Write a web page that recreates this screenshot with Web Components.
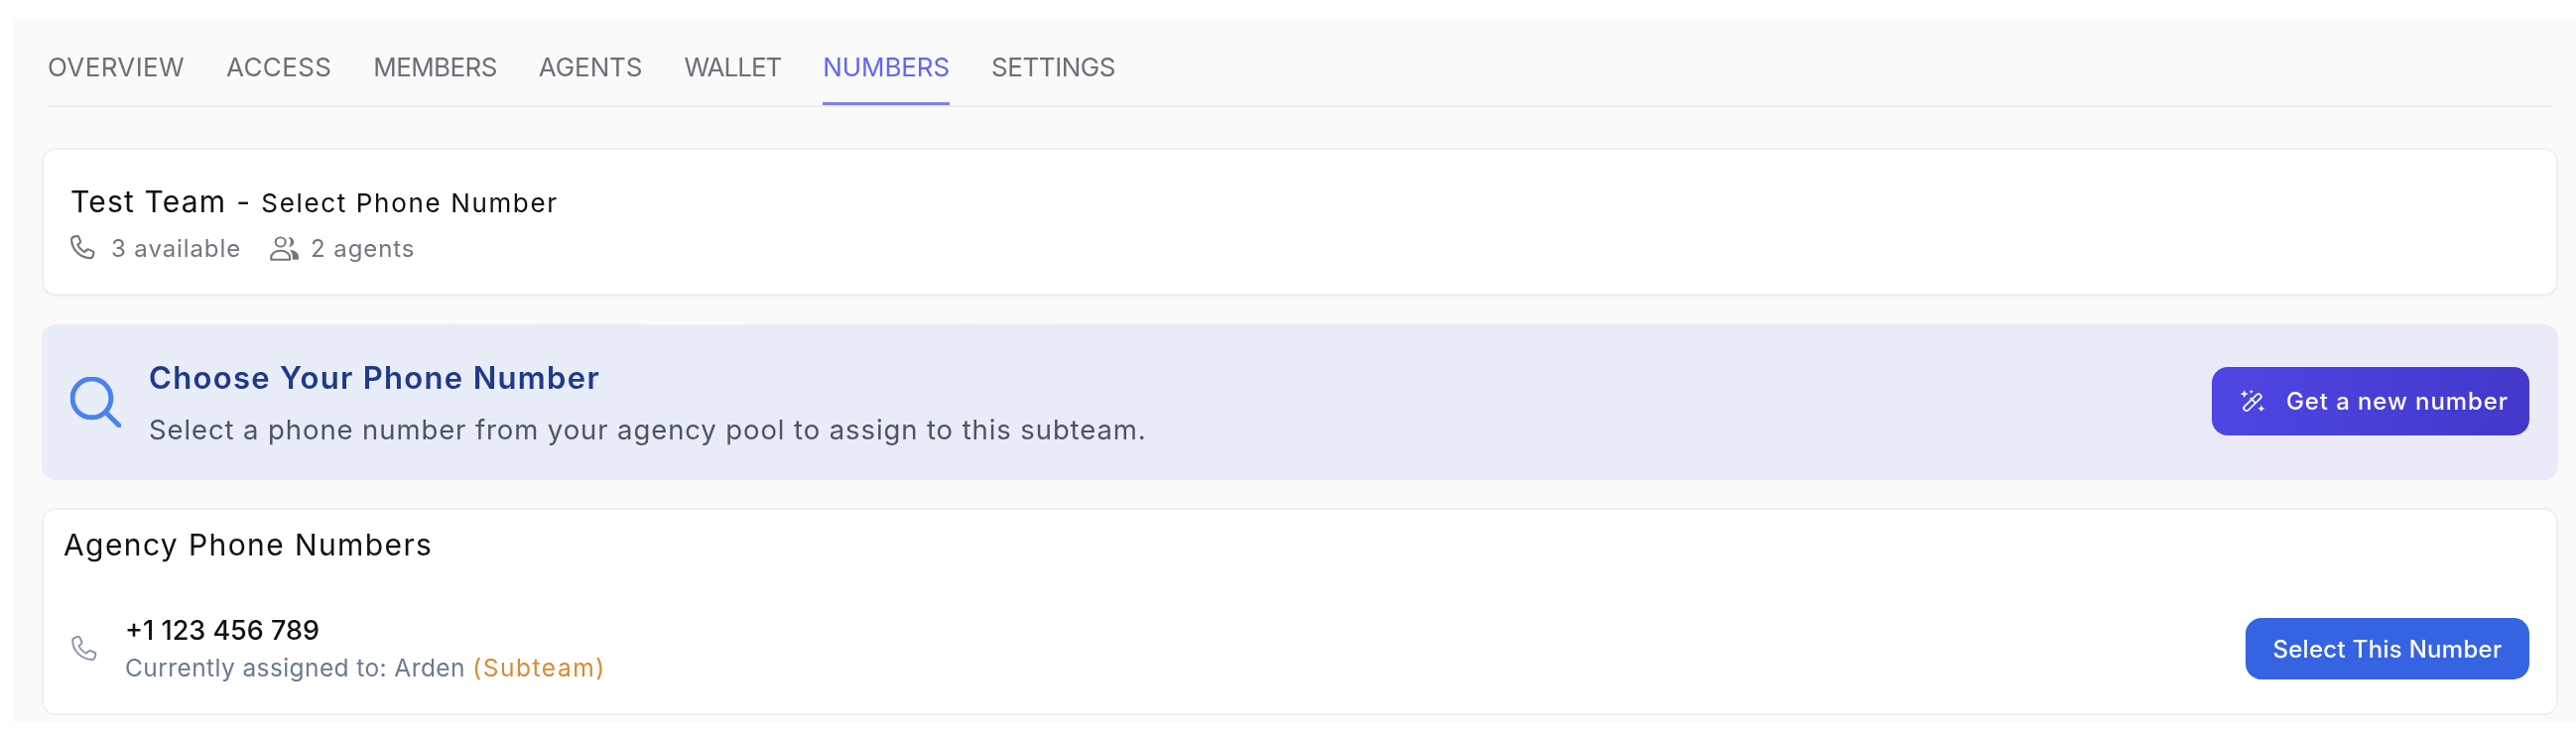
<!DOCTYPE html>
<html>
<head>
<meta charset="utf-8">
<style>
    html, body { margin: 0; background: #fff; }
    body { font-family: Inter, "Open Sans", sans-serif; }
</style>
</head>
<body>
<team-page>
    <tab-bar active="NUMBERS"></tab-bar>
    <team-header name="Test Team" sub="Select Phone Number" available="3 available" agents="2 agents"></team-header>
    <choose-banner>
        <span slot="title">Choose Your Phone Number</span>
        <span slot="text">Select a phone number from your agency pool to assign to this subteam.</span>
        <action-button slot="action" variant="indigo" icon="wand">Get a new number</action-button>
    </choose-banner>
    <numbers-card heading="Agency Phone Numbers">
        <number-row number="+1 123 456 789" owner="Arden" kind="(Subteam)">
            <action-button variant="blue">Select This Number</action-button>
        </number-row>
    </numbers-card>
</team-page>

<script>
const ICONS = {
    phone: {
        box: '2.6 1.6 19.8 20.8',
        body: `<path d="M5.6 2.9 7.3 2.4c.8-.2 1.6.2 1.9.9l1.2 2.8c.3.7.1 1.4-.4 1.9L8.400 9.500c.9 2.200 2.900 4.200 5.600 5.700l1.500-1.500c.5-.5 1.300-.7 1.900-.4l2.800 1.200c.7.3 1.100 1.100.9 1.900l-.5 1.800c-.3 1.200-1.400 2-2.600 1.900C10 19.500 3.900 13.400 3.500 5.700c-.1-1.200.9-2.500 2.100-2.800z"/>`
    },
    people: {
        box: '1.6 2 22.2 20',
        body: `<circle cx="9.500" cy="6.800" r="3.700"/>
               <path d="M2.500 21v-1.600c0-3.300 3-5.600 7-5.600s7 2.300 7 5.600V21z"/>
               <path fill="currentColor" stroke="none" d="M15.500 2.800a4 4 0 0 1 0 8 6.500 6.500 0 0 0 0-8z"/>
               <path fill="currentColor" stroke="none" d="M16.500 13c3.500.4 6.500 2.500 6.500 5.500V21h-4.500v-2c0-2.300-.8-4.300-2-6z"/>`
    },
    search: {
        box: '1.3 1.3 22.6 22.6',
        body: `<circle cx="10.800" cy="10.800" r="8.600"/><path d="m17 17 6 6"/>`
    },
    wand: {
        box: '2 0.5 22 22',
        body: `<rect x="-2.300" y="-9.500" width="4.600" height="19" rx="2.300" transform="translate(13 12.500) rotate(45)"/>
               <path d="m11.500 9 3.500 3.500"/>
               <path fill="currentColor" stroke="none" d="M6 1.500 7 4l2.500 1L7 6 6 8.500 5 6 2.500 5 5 4zM20.500 15l.9 2.100 2.100.9-2.100.9-.9 2.100-.9-2.100-2.100-.9 2.100-.9zM12 1l.5 1.500L14 3l-1.500.5L12 5l-.5-1.500L10 3l1.500-.5z"/>`
    }
};

class AppIcon extends HTMLElement {
    connectedCallback() {
        const icon = ICONS[this.getAttribute( 'name' )];
        const stroke = this.getAttribute( 'stroke' ) || '1.6';
        this.attachShadow( { mode: 'open' } ).innerHTML = `
            <style>
                :host { display: inline-flex; flex: none; width: var(--icon-w, 24px); height: var(--icon-h, 24px); }
                svg { width: 100%; height: 100%; }
            </style>
            <svg viewBox="${icon.box}" preserveAspectRatio="none" fill="none" stroke="currentColor" stroke-width="${stroke}" stroke-linecap="round" stroke-linejoin="round">${icon.body}</svg>
        `;
    }
}

class TeamPage extends HTMLElement {
    constructor() {
        super();
        this.attachShadow( { mode: 'open' } ).innerHTML = `
            <style>
                :host {
                    display: flex;
                    flex-direction: column;
                    gap: 28px;
                    height: 711px;
                    box-sizing: border-box;
                    margin: 17px 0 14px 12px;
                    padding: 0 18px 0 30px;
                    background: #fafafa;
                    filter: blur(0.5px);
                }
            </style>
            <slot></slot>
        `;
    }
}

class TabBar extends HTMLElement {
    connectedCallback() {
        const active = this.getAttribute( 'active' );
        // tracking per tab, Inter's caps don't run as evenly wide as the reference's
        const tabs = [
            [ 'OVERVIEW', 0.37 ], [ 'ACCESS', 0.37 ], [ 'MEMBERS', -0.58 ], [ 'AGENTS', -0.1 ],
            [ 'WALLET', -1 ], [ 'NUMBERS', -0.1 ], [ 'SETTINGS', -0.45 ]
        ];
        this.attachShadow( { mode: 'open' } ).innerHTML = `
            <style>
                :host {
                    display: flex;
                    gap: 42px;
                    margin: 0 6px 13px 6px;
                    height: 91px;
                    box-sizing: border-box;
                    border-bottom: 2px solid #eceef1;
                }
                a {
                    display: block;
                    height: 89px;
                    box-sizing: border-box;
                    padding-top: 34px;
                    font-size: 26px;
                    line-height: 34px;
                    white-space: nowrap;
                    color: #6b7075;
                }
                a.on { color: #6366f1; border-bottom: 3px solid #7c7ff0; }
            </style>
            ${tabs.map( ( [ t, s ] ) => `<a class="${t === active ? 'on' : ''}" style="letter-spacing: ${s}px">${t}</a>` ).join( '' )}
        `;
    }
}

class TeamHeader extends HTMLElement {
    connectedCallback() {
        const get = k => this.getAttribute( k );
        this.attachShadow( { mode: 'open' } ).innerHTML = `
            <style>
                :host {
                    display: block;
                    height: 150px;
                    box-sizing: border-box;
                    padding: 32px 26px 0 27px;
                    background: #fff;
                    border: 2px solid #eef0f4;
                    border-bottom-width: 3px;
                    border-radius: 14px;
                }
                .title { display: flex; align-items: baseline; height: 40px; line-height: 40px; color: #111; font-size: 30px; letter-spacing: 1.2px; white-space: nowrap; }
                .dash { margin: 0 10px; }
                .sub { font-size: 26px; letter-spacing: 1.65px; }
                .meta { display: flex; align-items: center; height: 40px; margin-top: 7px; color: #73777d; font-size: 24px; letter-spacing: 0.9px; }
                .phone { --icon-w: 25px; --icon-h: 26px; margin-right: 16px; }
                .people { --icon-w: 30px; --icon-h: 25px; margin: 0 11px 0 29px; }
            </style>
            <div class="title">${get( 'name' )}<span class="dash">-</span><span class="sub">${get( 'sub' )}</span></div>
            <div class="meta">
                <app-icon class="phone" name="phone" stroke="1.7"></app-icon><span>${get( 'available' )}</span>
                <app-icon class="people" name="people" stroke="1.5"></app-icon><span>${get( 'agents' )}</span>
            </div>
        `;
    }
}

class ChooseBanner extends HTMLElement {
    constructor() {
        super();
        this.attachShadow( { mode: 'open' } ).innerHTML = `
            <style>
                :host {
                    display: flex;
                    align-items: center;
                    height: 157px;
                    box-sizing: border-box;
                    padding: 0 29px;
                    border-radius: 14px;
                    background: linear-gradient(90deg, #e8edf8, #eaeaf8);
                }
                app-icon { --icon-w: 51px; --icon-h: 51px; color: #4a82ee; margin-right: 28px; }
                .copy { flex: 1; display: flex; flex-direction: column; gap: 16px; padding-top: 2px; }
                .title { height: 36px; line-height: 36px; font-size: 31px; font-weight: 600; letter-spacing: 1.33px; color: #1e3a8a; }
                .text { height: 36px; line-height: 36px; font-size: 27.5px; letter-spacing: 0.9px; color: #4b5563; }
            </style>
            <app-icon name="search" stroke="2.2"></app-icon>
            <div class="copy">
                <div class="title"><slot name="title"></slot></div>
                <div class="text"><slot name="text"></slot></div>
            </div>
            <slot name="action"></slot>
        `;
    }
}

class ActionButton extends HTMLElement {
    connectedCallback() {
        const icon = this.getAttribute( 'icon' );
        this.attachShadow( { mode: 'open' } ).innerHTML = `
            <style>
                :host {
                    display: inline-flex;
                    align-items: center;
                    box-sizing: border-box;
                    color: #fff;
                    white-space: nowrap;
                    font-weight: 500;
                    font-size: 24px;
                }
                :host([variant=indigo]) {
                    width: 320px; height: 69px; padding-left: 28px; margin-bottom: 2px; border-radius: 16px;
                    letter-spacing: 0.9px;
                    background: linear-gradient(100deg, #4f46e5, #4338ca);
                    --icon-w: 26px; --icon-h: 25px;
                }
                :host([variant=blue]) {
                    width: 286px; height: 62px; justify-content: center; border-radius: 16px;
                    letter-spacing: 0.3px;
                    background: #3563e2;
                }
                app-icon { margin-right: 21px; }
            </style>
            ${icon ? `<app-icon name="${icon}" stroke="1.5"></app-icon>` : ''}<slot></slot>
        `;
    }
}

class NumbersCard extends HTMLElement {
    connectedCallback() {
        this.attachShadow( { mode: 'open' } ).innerHTML = `
            <style>
                :host {
                    display: block;
                    height: 209px;
                    box-sizing: border-box;
                    padding: 15px 27px 0 20px;
                    background: #fff;
                    border: 2px solid #eef0f4;
                    border-radius: 14px;
                }
                h2 { margin: 0 0 47px; height: 40px; line-height: 40px; font-size: 30px; font-weight: 400; letter-spacing: 1.4px; color: #111; }
            </style>
            <h2>${this.getAttribute( 'heading' )}</h2>
            <slot></slot>
        `;
    }
}

class NumberRow extends HTMLElement {
    connectedCallback() {
        const get = k => this.getAttribute( k );
        this.attachShadow( { mode: 'open' } ).innerHTML = `
            <style>
                :host { display: flex; align-items: center; padding-left: 8px; }
                app-icon { --icon-w: 26px; --icon-h: 27px; color: #8a95a8; margin-right: 28px; }
                .info { flex: 1; }
                .num { height: 38px; line-height: 38px; margin-top: 1px; font-size: 27px; font-weight: 500; color: #111; }
                .own { height: 37px; line-height: 37px; font-size: 24.5px; letter-spacing: 0.41px; color: #6b7a90; }
                .own b { font-weight: 400; letter-spacing: 1.55px; color: #d98a32; }
            </style>
            <app-icon name="phone" stroke="1.5"></app-icon>
            <div class="info">
                <div class="num">${get( 'number' )}</div>
                <div class="own">Currently assigned to: ${get( 'owner' )} <b>${get( 'kind' )}</b></div>
            </div>
            <slot></slot>
        `;
    }
}

customElements.define( 'app-icon', AppIcon );
customElements.define( 'team-page', TeamPage );
customElements.define( 'tab-bar', TabBar );
customElements.define( 'team-header', TeamHeader );
customElements.define( 'choose-banner', ChooseBanner );
customElements.define( 'action-button', ActionButton );
customElements.define( 'numbers-card', NumbersCard );
customElements.define( 'number-row', NumberRow );
</script>
</body>
</html>
